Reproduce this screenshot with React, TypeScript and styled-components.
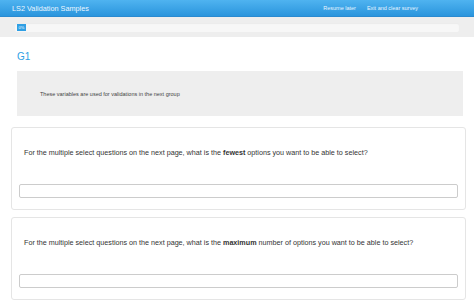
import styled, { createGlobalStyle } from "styled-components";

const GlobalStyle = createGlobalStyle`
  html, body {
    margin: 0;
    padding: 0;
    background: #ffffff;
    font-family: "Liberation Sans", Arial, sans-serif;
  }
`;

const questions = [
  { before: "For the multiple select questions on the next page, what is the ", bold: "fewest", after: " options you want to be able to select?" },
  { before: "For the multiple select questions on the next page, what is the ", bold: "maximum", after: " number of options you want to be able to select?" },
];

export default function App() {
  return (
    <>
      <GlobalStyle />
      <NavBar>
        <Brand>LS2 Validation Samples</Brand>
        <NavLinks>
          <NavLink>Resume later</NavLink>
          <NavLink>Exit and clear survey</NavLink>
        </NavLinks>
      </NavBar>
      <ProgressWrap>
        <Track>
          <Fill>0%</Fill>
        </Track>
      </ProgressWrap>
      <Main>
        <GroupTitle>G1</GroupTitle>
        <GroupDesc>These variables are used for validations in the next group</GroupDesc>
        {questions.map((q, i) => (
          <QuestionCard key={i}>
            <QuestionText>
              {q.before}
              <b>{q.bold}</b>
              {q.after}
            </QuestionText>
            <AnswerInput />
          </QuestionCard>
        ))}
      </Main>
    </>
  );
}

const NavBar = styled.div`
  height: 17px;
  background: linear-gradient(#4fb3f0, #2a95dd);
  border-bottom: 1px solid #2a8ad0;
  display: flex;
  align-items: center;
  justify-content: space-between;
  padding: 0 56px 0 12px;
  box-sizing: border-box;
`;

const Brand = styled.div`
  color: #eaf6ff;
  font-size: 7.3px;
`;

const NavLinks = styled.div`
  display: flex;
  gap: 11px;
`;

const NavLink = styled.span`
  color: #e8f5ff;
  font-size: 5.5px;
`;

const ProgressWrap = styled.div`
  background: #eeeeee;
  height: 20px;
  padding: 6px 15px 0 15px;
  box-sizing: border-box;
`;

const Track = styled.div`
  height: 9px;
  background: #f7f7f7;
  border-radius: 2px;
  box-shadow: inset 0 1px 1px rgba(0, 0, 0, 0.05);
  padding: 1px 2px;
  box-sizing: border-box;
`;

const Fill = styled.div`
  width: 9px;
  height: 7px;
  background: #2f9fe4;
  color: #ffffff;
  font-size: 4px;
  line-height: 7px;
  text-align: center;
`;

const Main = styled.div`
  padding: 14px 8px 0 11px;
  display: flex;
  flex-direction: column;
`;

const GroupTitle = styled.div`
  color: #2f9fe4;
  font-size: 10px;
  padding-left: 6px;
  margin-bottom: 9px;
`;

const GroupDesc = styled.div`
  background: #eeeeee;
  margin: 0 3px 11px 6px;
  height: 45px;
  box-sizing: border-box;
  padding: 20px 23px 0;
  color: #444444;
  font-size: 5.5px;
`;

const QuestionCard = styled.div`
  border: 1px solid #e5e5e5;
  border-radius: 3px;
  height: 83px;
  box-sizing: border-box;
  margin-bottom: 7px;
  padding: 20px 7px 0 7px;
  display: flex;
  flex-direction: column;
`;

const QuestionText = styled.div`
  color: #333333;
  font-size: 7.2px;
  padding-left: 5px;
  height: 36px;
  b {
    font-weight: bold;
  }
`;

const AnswerInput = styled.div`
  height: 14px;
  border: 1px solid #cccccc;
  border-radius: 2px;
  box-sizing: border-box;
  background: #ffffff;
`;
